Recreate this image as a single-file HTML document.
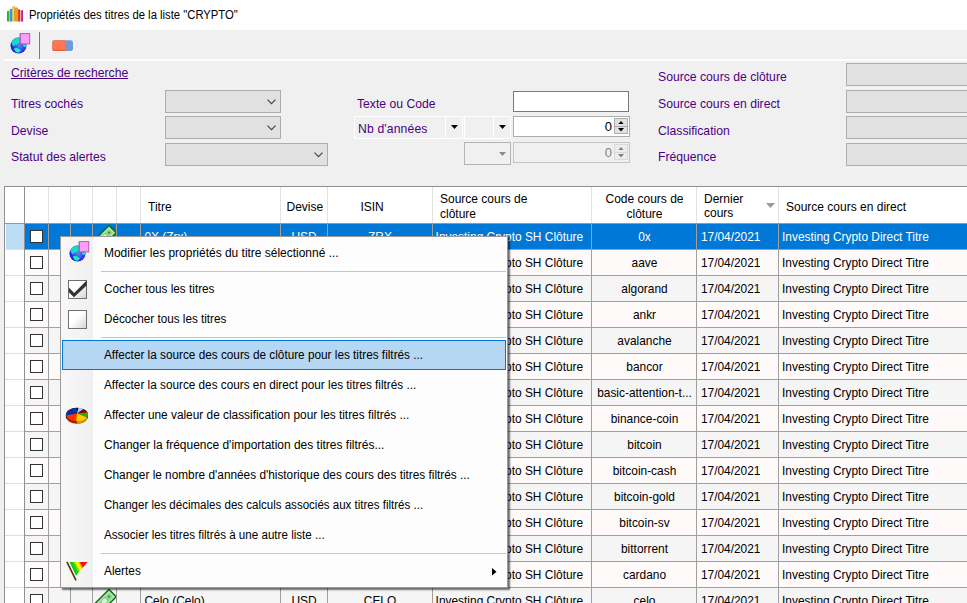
<!DOCTYPE html><html><head><meta charset="utf-8"><title>Propriétés des titres</title><style>
*{box-sizing:border-box;margin:0;padding:0}
html,body{width:967px;height:603px;overflow:hidden;background:#f0f0f0;font-family:"Liberation Sans",sans-serif;font-size:12px;color:#000}
.a{position:absolute;white-space:nowrap;line-height:14px}
.p{color:#4b0082;font-size:12.2px}
.cb{position:absolute;background:#e1e1e1;border:1px solid #adadad}
.ro{position:absolute;background:#e1e1e1;border:1px solid #adadad;border-right:none}
.vl{position:absolute;width:1px;background:#a0a0a0}
.hl{position:absolute;height:1px;background:#a0a0a0}
.row{position:absolute;left:25px;width:950px;height:25px}
.ck{position:absolute;left:30px;width:13px;height:13px;background:#fff;border:1px solid #333}
.c{position:absolute;white-space:nowrap;line-height:14px;text-align:center}
.g{font-size:11.92px}
.mi{position:absolute;left:104.1px;white-space:nowrap;line-height:14px;transform-origin:0 50%;color:#000}
</style></head><body>
<div class="a" style="left:0;top:0;width:967px;height:30px;background:#fff"></div>
<svg class="a" style="left:6px;top:5px" width="18" height="18" viewBox="0 0 18 18">
<defs>
<linearGradient id="g1" x1="0" x2="1"><stop offset="0" stop-color="#1f8f1f"/><stop offset=".5" stop-color="#44d844"/><stop offset="1" stop-color="#176a17"/></linearGradient>
<linearGradient id="g2" x1="0" x2="1"><stop offset="0" stop-color="#1585c8"/><stop offset=".5" stop-color="#3cbcff"/><stop offset="1" stop-color="#0f68a0"/></linearGradient>
<linearGradient id="g3" x1="0" x2="1"><stop offset="0" stop-color="#d0a000"/><stop offset=".5" stop-color="#ffe030"/><stop offset="1" stop-color="#a87c00"/></linearGradient>
<linearGradient id="g4" x1="0" x2="1"><stop offset="0" stop-color="#dc7000"/><stop offset=".5" stop-color="#ffa428"/><stop offset="1" stop-color="#b05400"/></linearGradient>
<linearGradient id="g5" x1="0" x2="1"><stop offset="0" stop-color="#cc2c0c"/><stop offset=".5" stop-color="#ff5428"/><stop offset="1" stop-color="#9a2006"/></linearGradient>
<linearGradient id="g6" x1="0" x2="1"><stop offset="0" stop-color="#b81480"/><stop offset=".5" stop-color="#ff40b8"/><stop offset="1" stop-color="#8a0a5e"/></linearGradient>
</defs>
<rect x="1" y="5.7" width="2.3" height="11" rx="1" fill="url(#g1)"/>
<rect x="3.8" y="3.7" width="2.4" height="13" rx="1" fill="url(#g2)"/>
<rect x="6.4" y="1" width="2.4" height="15.7" rx="1" fill="url(#g3)"/>
<rect x="9.2" y="2.2" width="2.3" height="14.5" rx="1" fill="url(#g4)"/>
<rect x="11.9" y="4.2" width="2.3" height="12.5" rx="1" fill="url(#g5)"/>
<rect x="14.8" y="5" width="2.2" height="11.7" rx="1" fill="url(#g6)"/>
</svg>
<div class="a" style="left:28.5px;top:8px;transform-origin:0 50%;transform:scaleX(0.94)">Propriétés des titres de la liste "CRYPTO"</div>
<svg class="a" style="left:9px;top:32px" width="22" height="22" viewBox="0 0 22 22">
<defs><radialGradient id="gb1" cx=".55" cy=".5" r=".55"><stop offset="0" stop-color="#5a86e4"/><stop offset=".55" stop-color="#3a48ee"/><stop offset="1" stop-color="#1c0ee6"/></radialGradient></defs>
<circle cx="9.5" cy="13.6" r="8" fill="url(#gb1)"/>
<path d="M2.9 9.2L4.6 7 7.2 6.1H10.7L10.9 10.9 8.9 11.4 8.1 13.1 6.3 12.6 5.5 14.4 3.3 13.1 2.5 11.4z" fill="#14ecc0" opacity=".9"/>
<path d="M5 16.3L8.5 15.9 12 18.2 10.7 20 8.9 20.8 6.8 20 5.3 17.8z" fill="#14f0c0"/>
<path d="M14.1 12.2L17.1 12.4V14.6L15.4 15 14.1 13.9z" fill="#14f0c0"/>
<rect x="10.3" y="1.6" width="1.2" height="10.2" fill="#8a8a9a" opacity=".6"/>
<rect x="11.4" y="1.6" width="9.3" height="10.3" fill="#ff9cfc" stroke="#b060b0" stroke-width="1"/>
</svg>
<div class="a" style="left:39px;top:32px;width:1px;height:27px;background:#7a7a7a"></div>
<svg class="a" style="left:52px;top:40px" width="22" height="12" viewBox="0 0 22 12">
<rect x="0.2" y="0.2" width="20.8" height="10.8" rx="2.2" fill="#6e9bd6"/>
<path d="M2.4 .2H13V11H2.4A2.2 2.2 0 0 1 .2 8.8V2.4A2.2 2.2 0 0 1 2.4 .2z" fill="#ff7650"/>
<path d="M.6 9.6A2.2 2.2 0 0 0 2.4 11H13V9.8H2.4z" fill="#ee5a30"/>
</svg>
<div class="a" style="left:4px;top:59px;width:963px;height:2px;background:#fdfdff"></div>
<div class="a p" style="left:11px;top:65.5px;text-decoration:underline">Critères de recherche</div>
<div class="a p" style="left:11px;top:96.8px;">Titres cochés</div>
<div class="a p" style="left:11px;top:123.80000000000001px;">Devise</div>
<div class="a p" style="left:11px;top:150px;">Statut des alertes</div>
<div class="a p" style="left:357px;top:96.9px;">Texte ou Code</div>
<div class="a p" style="left:658px;top:70.2px;">Source cours de clôture</div>
<div class="a p" style="left:658px;top:97px;">Source cours en direct</div>
<div class="a p" style="left:658px;top:124px;">Classification</div>
<div class="a p" style="left:658px;top:150px;">Fréquence</div>
<div class="cb" style="left:165px;top:90px;width:116px;height:23px"><svg style="position:absolute;right:4px;top:8px" width="9" height="6" viewBox="0 0 9 6"><path d="M.5.7L4.5 4.7 8.5.7" fill="none" stroke="#404040" stroke-width="1.1"/></svg></div>
<div class="cb" style="left:165px;top:116px;width:116px;height:23px"><svg style="position:absolute;right:4px;top:8px" width="9" height="6" viewBox="0 0 9 6"><path d="M.5.7L4.5 4.7 8.5.7" fill="none" stroke="#404040" stroke-width="1.1"/></svg></div>
<div class="cb" style="left:165px;top:143px;width:163px;height:23px"><svg style="position:absolute;right:4px;top:8px" width="9" height="6" viewBox="0 0 9 6"><path d="M.5.7L4.5 4.7 8.5.7" fill="none" stroke="#404040" stroke-width="1.1"/></svg></div>
<div class="a" style="left:513px;top:91px;width:116px;height:21px;background:#fff;border:1px solid #7a7a7a"></div>
<div class="a" style="left:354px;top:116px;width:109px;height:23px;border:1px solid #fff"><div style="position:absolute;left:90px;top:0;width:1px;height:21px;background:#fff"></div><svg style="position:absolute;left:96px;top:8px" width="7" height="4" viewBox="0 0 7 4"><path d="M0 0h7L3.5 4z" fill="#000"/></svg></div>
<div class="a p" style="left:358px;top:121.69999999999999px;letter-spacing:.14px">Nb d'années</div>
<div class="a" style="left:464px;top:116px;width:47px;height:23px;border:1px solid #fff"><div style="position:absolute;left:28px;top:0;width:1px;height:21px;background:#fff"></div><svg style="position:absolute;left:34px;top:8px" width="7" height="4" viewBox="0 0 7 4"><path d="M0 0h7L3.5 4z" fill="#000"/></svg></div>
<div class="a" style="left:513px;top:116px;width:117px;height:21px;background:#fff;border:1px solid #adadad"><div style="position:absolute;right:1px;top:1px;width:14px;height:16px;background:#e1e1e1;border:1px solid #adadad"><div style="position:absolute;left:0;top:6.5px;width:12px;height:1px;background:#adadad"></div>
<svg style="position:absolute;left:3px;top:1.5px" width="6" height="3.5" viewBox="0 0 6 3.5"><path d="M0 3.5h6L3 0z" fill="#000"/></svg>
<svg style="position:absolute;left:3px;top:9.3px" width="6" height="3.5" viewBox="0 0 6 3.5"><path d="M0 0h6L3 3.5z" fill="#000"/></svg></div><div class="a" style="right:17px;top:3px;font-size:13px">0</div></div>
<div class="a" style="left:464px;top:142px;width:47px;height:23px;background:#f0f0f0;border:1px solid #b4b4b4"><svg style="position:absolute;left:34px;top:9px" width="7" height="4" viewBox="0 0 7 4"><path d="M0 0h7L3.5 4z" fill="#8a8a8a"/></svg></div>
<div class="a" style="left:513px;top:142px;width:117px;height:21px;background:#f0f0f0;border:1px solid #c4c4c4"><div style="position:absolute;right:1px;top:1px;width:14px;height:16px;background:#ececec;border:1px solid #d8d8d8"><div style="position:absolute;left:0;top:6.5px;width:12px;height:1px;background:#d8d8d8"></div>
<svg style="position:absolute;left:3px;top:1.5px" width="6" height="3.5" viewBox="0 0 6 3.5"><path d="M0 3.5h6L3 0z" fill="#808080"/></svg>
<svg style="position:absolute;left:3px;top:9.3px" width="6" height="3.5" viewBox="0 0 6 3.5"><path d="M0 0h6L3 3.5z" fill="#808080"/></svg></div><div class="a" style="right:17px;top:3px;font-size:13px;color:#808080">0</div></div>
<div class="ro" style="left:846px;top:63px;width:125px;height:23px"></div>
<div class="ro" style="left:846px;top:90px;width:125px;height:23px"></div>
<div class="ro" style="left:846px;top:116px;width:125px;height:23px"></div>
<div class="ro" style="left:846px;top:143px;width:125px;height:23px"></div>
<div class="a" style="left:4px;top:186px;width:970px;height:430px;background:#fff;border:1px solid #909090"></div>
<div class="row" style="top:224px;background:#0078d7"></div>
<div class="a" style="left:6px;top:224px;width:18px;height:25px;background:#bcdcf4"></div>
<div class="hl" style="left:5px;top:249px;width:19px;background:#e0e0e0"></div>
<div class="hl" style="left:24px;top:249px;width:950px"></div>
<div class="row" style="top:250px;background:#fefaf9"></div>
<div class="hl" style="left:5px;top:275px;width:19px;background:#e0e0e0"></div>
<div class="hl" style="left:24px;top:275px;width:950px"></div>
<div class="row" style="top:276px;background:#f5f5f5"></div>
<div class="hl" style="left:5px;top:301px;width:19px;background:#e0e0e0"></div>
<div class="hl" style="left:24px;top:301px;width:950px"></div>
<div class="row" style="top:302px;background:#fefaf9"></div>
<div class="hl" style="left:5px;top:327px;width:19px;background:#e0e0e0"></div>
<div class="hl" style="left:24px;top:327px;width:950px"></div>
<div class="row" style="top:328px;background:#f5f5f5"></div>
<div class="hl" style="left:5px;top:353px;width:19px;background:#e0e0e0"></div>
<div class="hl" style="left:24px;top:353px;width:950px"></div>
<div class="row" style="top:354px;background:#fefaf9"></div>
<div class="hl" style="left:5px;top:379px;width:19px;background:#e0e0e0"></div>
<div class="hl" style="left:24px;top:379px;width:950px"></div>
<div class="row" style="top:380px;background:#f5f5f5"></div>
<div class="hl" style="left:5px;top:405px;width:19px;background:#e0e0e0"></div>
<div class="hl" style="left:24px;top:405px;width:950px"></div>
<div class="row" style="top:406px;background:#fefaf9"></div>
<div class="hl" style="left:5px;top:431px;width:19px;background:#e0e0e0"></div>
<div class="hl" style="left:24px;top:431px;width:950px"></div>
<div class="row" style="top:432px;background:#f5f5f5"></div>
<div class="hl" style="left:5px;top:457px;width:19px;background:#e0e0e0"></div>
<div class="hl" style="left:24px;top:457px;width:950px"></div>
<div class="row" style="top:458px;background:#fefaf9"></div>
<div class="hl" style="left:5px;top:483px;width:19px;background:#e0e0e0"></div>
<div class="hl" style="left:24px;top:483px;width:950px"></div>
<div class="row" style="top:484px;background:#f5f5f5"></div>
<div class="hl" style="left:5px;top:509px;width:19px;background:#e0e0e0"></div>
<div class="hl" style="left:24px;top:509px;width:950px"></div>
<div class="row" style="top:510px;background:#fefaf9"></div>
<div class="hl" style="left:5px;top:535px;width:19px;background:#e0e0e0"></div>
<div class="hl" style="left:24px;top:535px;width:950px"></div>
<div class="row" style="top:536px;background:#f5f5f5"></div>
<div class="hl" style="left:5px;top:561px;width:19px;background:#e0e0e0"></div>
<div class="hl" style="left:24px;top:561px;width:950px"></div>
<div class="row" style="top:562px;background:#fefaf9"></div>
<div class="hl" style="left:5px;top:587px;width:19px;background:#e0e0e0"></div>
<div class="hl" style="left:24px;top:587px;width:950px"></div>
<div class="row" style="top:588px;background:#f5f5f5"></div>
<div class="hl" style="left:5px;top:613px;width:19px;background:#e0e0e0"></div>
<div class="hl" style="left:24px;top:613px;width:950px"></div>
<div class="hl" style="left:5px;top:223px;width:965px;background:#989898"></div>
<div class="vl" style="left:24px;top:187px;height:420px;background:#909090"></div>
<div class="vl" style="left:48px;top:187px;height:36px;background:#e2e2e2"></div>
<div class="vl" style="left:48px;top:224px;height:390px"></div>
<div class="vl" style="left:70px;top:187px;height:36px;background:#e2e2e2"></div>
<div class="vl" style="left:70px;top:224px;height:390px"></div>
<div class="vl" style="left:92px;top:187px;height:36px;background:#e2e2e2"></div>
<div class="vl" style="left:92px;top:224px;height:390px"></div>
<div class="vl" style="left:116px;top:187px;height:36px;background:#e2e2e2"></div>
<div class="vl" style="left:116px;top:224px;height:390px"></div>
<div class="vl" style="left:140px;top:187px;height:36px;background:#e2e2e2"></div>
<div class="vl" style="left:140px;top:224px;height:390px"></div>
<div class="vl" style="left:280px;top:187px;height:36px;background:#e2e2e2"></div>
<div class="vl" style="left:280px;top:224px;height:390px"></div>
<div class="vl" style="left:327px;top:187px;height:36px;background:#e2e2e2"></div>
<div class="vl" style="left:327px;top:224px;height:390px"></div>
<div class="vl" style="left:432px;top:187px;height:36px;background:#e2e2e2"></div>
<div class="vl" style="left:432px;top:224px;height:390px"></div>
<div class="vl" style="left:591px;top:187px;height:36px;background:#e2e2e2"></div>
<div class="vl" style="left:591px;top:224px;height:390px"></div>
<div class="vl" style="left:696px;top:187px;height:36px;background:#e2e2e2"></div>
<div class="vl" style="left:696px;top:224px;height:390px"></div>
<div class="vl" style="left:778px;top:187px;height:36px;background:#e2e2e2"></div>
<div class="vl" style="left:778px;top:224px;height:390px"></div>
<div class="a" style="left:148px;top:200px;">Titre</div>
<div class="a" style="left:286.5px;top:200px;">Devise</div>
<div class="a" style="left:360.4px;top:200px;">ISIN</div>
<div class="a" style="left:440px;top:191.8px;">Source cours de</div>
<div class="a" style="left:440px;top:206.6px;">clôture</div>
<div class="c" style="left:592px;width:105px;top:191.8px">Code cours de</div>
<div class="c" style="left:592px;width:105px;top:206.8px">clôture</div>
<div class="a" style="left:704px;top:191.8px;">Dernier</div>
<div class="a" style="left:704px;top:206.4px;">cours</div>
<div class="a" style="left:786px;top:200px;">Source cours en direct</div>
<svg class="a" style="left:766px;top:203px" width="9" height="5" viewBox="0 0 9 5"><path d="M0 0h9L4.5 5z" fill="#9a9a9a"/></svg>
<div class="ck" style="top:230px"></div>
<svg class="a" style="left:93px;top:224px" width="23" height="25" viewBox="0 0 23 25"><g transform="translate(11.5 13.2) rotate(-45)"><rect x="-11.5" y="-5.2" width="23" height="10.4" fill="#8fd28f" stroke="#0b640b" stroke-width="1.3"/><rect x="-9.6" y="-3.4" width="19.2" height="6.8" fill="none" stroke="#b8e8b8" stroke-width="1"/><ellipse cx="0" cy="0" rx="3.6" ry="2.9" fill="#d6f2d6" stroke="#6cbf6c" stroke-width=".8"/><circle cx="6.5" cy="0" r="1.1" fill="#22a022"/><circle cx="-6.5" cy="0" r="1.1" fill="#22a022"/></g></svg>
<div class="a g" style="left:144.5px;top:230.4px;color:#fff">0X (Zrx)</div>
<div class="c g" style="left:281px;width:46px;top:230.4px;color:#fff">USD</div>
<div class="c g" style="left:328px;width:104px;top:230.4px;color:#fff">ZRX</div>
<div class="a g" style="left:435.6px;top:230.4px;color:#fff">Investing Crypto SH Clôture</div>
<div class="c g" style="left:592px;width:105px;top:230.4px;color:#fff">0x</div>
<div class="a g" style="left:700.9px;top:230.4px;color:#fff">17/04/2021</div>
<div class="a g" style="left:782px;top:230.4px;color:#fff">Investing Crypto Direct Titre</div>
<div class="ck" style="top:256px"></div>
<svg class="a" style="left:93px;top:250px" width="23" height="25" viewBox="0 0 23 25"><g transform="translate(11.5 13.2) rotate(-45)"><rect x="-11.5" y="-5.2" width="23" height="10.4" fill="#8fd28f" stroke="#0b640b" stroke-width="1.3"/><rect x="-9.6" y="-3.4" width="19.2" height="6.8" fill="none" stroke="#b8e8b8" stroke-width="1"/><ellipse cx="0" cy="0" rx="3.6" ry="2.9" fill="#d6f2d6" stroke="#6cbf6c" stroke-width=".8"/><circle cx="6.5" cy="0" r="1.1" fill="#22a022"/><circle cx="-6.5" cy="0" r="1.1" fill="#22a022"/></g></svg>
<div class="a g" style="left:144.5px;top:256.4px;color:#000">Aave (Aave)</div>
<div class="c g" style="left:281px;width:46px;top:256.4px;color:#000">USD</div>
<div class="c g" style="left:328px;width:104px;top:256.4px;color:#000">AAVE</div>
<div class="a g" style="left:435.6px;top:256.4px;color:#000">Investing Crypto SH Clôture</div>
<div class="c g" style="left:592px;width:105px;top:256.4px;color:#000">aave</div>
<div class="a g" style="left:700.9px;top:256.4px;color:#000">17/04/2021</div>
<div class="a g" style="left:782px;top:256.4px;color:#000">Investing Crypto Direct Titre</div>
<div class="ck" style="top:282px"></div>
<svg class="a" style="left:93px;top:276px" width="23" height="25" viewBox="0 0 23 25"><g transform="translate(11.5 13.2) rotate(-45)"><rect x="-11.5" y="-5.2" width="23" height="10.4" fill="#8fd28f" stroke="#0b640b" stroke-width="1.3"/><rect x="-9.6" y="-3.4" width="19.2" height="6.8" fill="none" stroke="#b8e8b8" stroke-width="1"/><ellipse cx="0" cy="0" rx="3.6" ry="2.9" fill="#d6f2d6" stroke="#6cbf6c" stroke-width=".8"/><circle cx="6.5" cy="0" r="1.1" fill="#22a022"/><circle cx="-6.5" cy="0" r="1.1" fill="#22a022"/></g></svg>
<div class="a g" style="left:144.5px;top:282.4px;color:#000">Algorand (Algo)</div>
<div class="c g" style="left:281px;width:46px;top:282.4px;color:#000">USD</div>
<div class="c g" style="left:328px;width:104px;top:282.4px;color:#000">ALGO</div>
<div class="a g" style="left:435.6px;top:282.4px;color:#000">Investing Crypto SH Clôture</div>
<div class="c g" style="left:592px;width:105px;top:282.4px;color:#000">algorand</div>
<div class="a g" style="left:700.9px;top:282.4px;color:#000">17/04/2021</div>
<div class="a g" style="left:782px;top:282.4px;color:#000">Investing Crypto Direct Titre</div>
<div class="ck" style="top:308px"></div>
<svg class="a" style="left:93px;top:302px" width="23" height="25" viewBox="0 0 23 25"><g transform="translate(11.5 13.2) rotate(-45)"><rect x="-11.5" y="-5.2" width="23" height="10.4" fill="#8fd28f" stroke="#0b640b" stroke-width="1.3"/><rect x="-9.6" y="-3.4" width="19.2" height="6.8" fill="none" stroke="#b8e8b8" stroke-width="1"/><ellipse cx="0" cy="0" rx="3.6" ry="2.9" fill="#d6f2d6" stroke="#6cbf6c" stroke-width=".8"/><circle cx="6.5" cy="0" r="1.1" fill="#22a022"/><circle cx="-6.5" cy="0" r="1.1" fill="#22a022"/></g></svg>
<div class="a g" style="left:144.5px;top:308.4px;color:#000">Ankr (Ankr)</div>
<div class="c g" style="left:281px;width:46px;top:308.4px;color:#000">USD</div>
<div class="c g" style="left:328px;width:104px;top:308.4px;color:#000">ANKR</div>
<div class="a g" style="left:435.6px;top:308.4px;color:#000">Investing Crypto SH Clôture</div>
<div class="c g" style="left:592px;width:105px;top:308.4px;color:#000">ankr</div>
<div class="a g" style="left:700.9px;top:308.4px;color:#000">17/04/2021</div>
<div class="a g" style="left:782px;top:308.4px;color:#000">Investing Crypto Direct Titre</div>
<div class="ck" style="top:334px"></div>
<svg class="a" style="left:93px;top:328px" width="23" height="25" viewBox="0 0 23 25"><g transform="translate(11.5 13.2) rotate(-45)"><rect x="-11.5" y="-5.2" width="23" height="10.4" fill="#8fd28f" stroke="#0b640b" stroke-width="1.3"/><rect x="-9.6" y="-3.4" width="19.2" height="6.8" fill="none" stroke="#b8e8b8" stroke-width="1"/><ellipse cx="0" cy="0" rx="3.6" ry="2.9" fill="#d6f2d6" stroke="#6cbf6c" stroke-width=".8"/><circle cx="6.5" cy="0" r="1.1" fill="#22a022"/><circle cx="-6.5" cy="0" r="1.1" fill="#22a022"/></g></svg>
<div class="a g" style="left:144.5px;top:334.4px;color:#000">Avalanche (Avax)</div>
<div class="c g" style="left:281px;width:46px;top:334.4px;color:#000">USD</div>
<div class="c g" style="left:328px;width:104px;top:334.4px;color:#000">AVAX</div>
<div class="a g" style="left:435.6px;top:334.4px;color:#000">Investing Crypto SH Clôture</div>
<div class="c g" style="left:592px;width:105px;top:334.4px;color:#000">avalanche</div>
<div class="a g" style="left:700.9px;top:334.4px;color:#000">17/04/2021</div>
<div class="a g" style="left:782px;top:334.4px;color:#000">Investing Crypto Direct Titre</div>
<div class="ck" style="top:360px"></div>
<svg class="a" style="left:93px;top:354px" width="23" height="25" viewBox="0 0 23 25"><g transform="translate(11.5 13.2) rotate(-45)"><rect x="-11.5" y="-5.2" width="23" height="10.4" fill="#8fd28f" stroke="#0b640b" stroke-width="1.3"/><rect x="-9.6" y="-3.4" width="19.2" height="6.8" fill="none" stroke="#b8e8b8" stroke-width="1"/><ellipse cx="0" cy="0" rx="3.6" ry="2.9" fill="#d6f2d6" stroke="#6cbf6c" stroke-width=".8"/><circle cx="6.5" cy="0" r="1.1" fill="#22a022"/><circle cx="-6.5" cy="0" r="1.1" fill="#22a022"/></g></svg>
<div class="a g" style="left:144.5px;top:360.4px;color:#000">Bancor (Bnt)</div>
<div class="c g" style="left:281px;width:46px;top:360.4px;color:#000">USD</div>
<div class="c g" style="left:328px;width:104px;top:360.4px;color:#000">BNT</div>
<div class="a g" style="left:435.6px;top:360.4px;color:#000">Investing Crypto SH Clôture</div>
<div class="c g" style="left:592px;width:105px;top:360.4px;color:#000">bancor</div>
<div class="a g" style="left:700.9px;top:360.4px;color:#000">17/04/2021</div>
<div class="a g" style="left:782px;top:360.4px;color:#000">Investing Crypto Direct Titre</div>
<div class="ck" style="top:386px"></div>
<svg class="a" style="left:93px;top:380px" width="23" height="25" viewBox="0 0 23 25"><g transform="translate(11.5 13.2) rotate(-45)"><rect x="-11.5" y="-5.2" width="23" height="10.4" fill="#8fd28f" stroke="#0b640b" stroke-width="1.3"/><rect x="-9.6" y="-3.4" width="19.2" height="6.8" fill="none" stroke="#b8e8b8" stroke-width="1"/><ellipse cx="0" cy="0" rx="3.6" ry="2.9" fill="#d6f2d6" stroke="#6cbf6c" stroke-width=".8"/><circle cx="6.5" cy="0" r="1.1" fill="#22a022"/><circle cx="-6.5" cy="0" r="1.1" fill="#22a022"/></g></svg>
<div class="a g" style="left:144.5px;top:386.4px;color:#000">Basic Attention (Bat)</div>
<div class="c g" style="left:281px;width:46px;top:386.4px;color:#000">USD</div>
<div class="c g" style="left:328px;width:104px;top:386.4px;color:#000">BAT</div>
<div class="a g" style="left:435.6px;top:386.4px;color:#000">Investing Crypto SH Clôture</div>
<div class="c g" style="left:592px;width:105px;top:386.4px;color:#000">basic-attention-t...</div>
<div class="a g" style="left:700.9px;top:386.4px;color:#000">17/04/2021</div>
<div class="a g" style="left:782px;top:386.4px;color:#000">Investing Crypto Direct Titre</div>
<div class="ck" style="top:412px"></div>
<svg class="a" style="left:93px;top:406px" width="23" height="25" viewBox="0 0 23 25"><g transform="translate(11.5 13.2) rotate(-45)"><rect x="-11.5" y="-5.2" width="23" height="10.4" fill="#8fd28f" stroke="#0b640b" stroke-width="1.3"/><rect x="-9.6" y="-3.4" width="19.2" height="6.8" fill="none" stroke="#b8e8b8" stroke-width="1"/><ellipse cx="0" cy="0" rx="3.6" ry="2.9" fill="#d6f2d6" stroke="#6cbf6c" stroke-width=".8"/><circle cx="6.5" cy="0" r="1.1" fill="#22a022"/><circle cx="-6.5" cy="0" r="1.1" fill="#22a022"/></g></svg>
<div class="a g" style="left:144.5px;top:412.4px;color:#000">Binance Coin (Bnb)</div>
<div class="c g" style="left:281px;width:46px;top:412.4px;color:#000">USD</div>
<div class="c g" style="left:328px;width:104px;top:412.4px;color:#000">BNB</div>
<div class="a g" style="left:435.6px;top:412.4px;color:#000">Investing Crypto SH Clôture</div>
<div class="c g" style="left:592px;width:105px;top:412.4px;color:#000">binance-coin</div>
<div class="a g" style="left:700.9px;top:412.4px;color:#000">17/04/2021</div>
<div class="a g" style="left:782px;top:412.4px;color:#000">Investing Crypto Direct Titre</div>
<div class="ck" style="top:438px"></div>
<svg class="a" style="left:93px;top:432px" width="23" height="25" viewBox="0 0 23 25"><g transform="translate(11.5 13.2) rotate(-45)"><rect x="-11.5" y="-5.2" width="23" height="10.4" fill="#8fd28f" stroke="#0b640b" stroke-width="1.3"/><rect x="-9.6" y="-3.4" width="19.2" height="6.8" fill="none" stroke="#b8e8b8" stroke-width="1"/><ellipse cx="0" cy="0" rx="3.6" ry="2.9" fill="#d6f2d6" stroke="#6cbf6c" stroke-width=".8"/><circle cx="6.5" cy="0" r="1.1" fill="#22a022"/><circle cx="-6.5" cy="0" r="1.1" fill="#22a022"/></g></svg>
<div class="a g" style="left:144.5px;top:438.4px;color:#000">Bitcoin (Btc)</div>
<div class="c g" style="left:281px;width:46px;top:438.4px;color:#000">USD</div>
<div class="c g" style="left:328px;width:104px;top:438.4px;color:#000">BTC</div>
<div class="a g" style="left:435.6px;top:438.4px;color:#000">Investing Crypto SH Clôture</div>
<div class="c g" style="left:592px;width:105px;top:438.4px;color:#000">bitcoin</div>
<div class="a g" style="left:700.9px;top:438.4px;color:#000">17/04/2021</div>
<div class="a g" style="left:782px;top:438.4px;color:#000">Investing Crypto Direct Titre</div>
<div class="ck" style="top:464px"></div>
<svg class="a" style="left:93px;top:458px" width="23" height="25" viewBox="0 0 23 25"><g transform="translate(11.5 13.2) rotate(-45)"><rect x="-11.5" y="-5.2" width="23" height="10.4" fill="#8fd28f" stroke="#0b640b" stroke-width="1.3"/><rect x="-9.6" y="-3.4" width="19.2" height="6.8" fill="none" stroke="#b8e8b8" stroke-width="1"/><ellipse cx="0" cy="0" rx="3.6" ry="2.9" fill="#d6f2d6" stroke="#6cbf6c" stroke-width=".8"/><circle cx="6.5" cy="0" r="1.1" fill="#22a022"/><circle cx="-6.5" cy="0" r="1.1" fill="#22a022"/></g></svg>
<div class="a g" style="left:144.5px;top:464.4px;color:#000">Bitcoin Cash (Bch)</div>
<div class="c g" style="left:281px;width:46px;top:464.4px;color:#000">USD</div>
<div class="c g" style="left:328px;width:104px;top:464.4px;color:#000">BCH</div>
<div class="a g" style="left:435.6px;top:464.4px;color:#000">Investing Crypto SH Clôture</div>
<div class="c g" style="left:592px;width:105px;top:464.4px;color:#000">bitcoin-cash</div>
<div class="a g" style="left:700.9px;top:464.4px;color:#000">17/04/2021</div>
<div class="a g" style="left:782px;top:464.4px;color:#000">Investing Crypto Direct Titre</div>
<div class="ck" style="top:490px"></div>
<svg class="a" style="left:93px;top:484px" width="23" height="25" viewBox="0 0 23 25"><g transform="translate(11.5 13.2) rotate(-45)"><rect x="-11.5" y="-5.2" width="23" height="10.4" fill="#8fd28f" stroke="#0b640b" stroke-width="1.3"/><rect x="-9.6" y="-3.4" width="19.2" height="6.8" fill="none" stroke="#b8e8b8" stroke-width="1"/><ellipse cx="0" cy="0" rx="3.6" ry="2.9" fill="#d6f2d6" stroke="#6cbf6c" stroke-width=".8"/><circle cx="6.5" cy="0" r="1.1" fill="#22a022"/><circle cx="-6.5" cy="0" r="1.1" fill="#22a022"/></g></svg>
<div class="a g" style="left:144.5px;top:490.4px;color:#000">Bitcoin Gold (Btg)</div>
<div class="c g" style="left:281px;width:46px;top:490.4px;color:#000">USD</div>
<div class="c g" style="left:328px;width:104px;top:490.4px;color:#000">BTG</div>
<div class="a g" style="left:435.6px;top:490.4px;color:#000">Investing Crypto SH Clôture</div>
<div class="c g" style="left:592px;width:105px;top:490.4px;color:#000">bitcoin-gold</div>
<div class="a g" style="left:700.9px;top:490.4px;color:#000">17/04/2021</div>
<div class="a g" style="left:782px;top:490.4px;color:#000">Investing Crypto Direct Titre</div>
<div class="ck" style="top:516px"></div>
<svg class="a" style="left:93px;top:510px" width="23" height="25" viewBox="0 0 23 25"><g transform="translate(11.5 13.2) rotate(-45)"><rect x="-11.5" y="-5.2" width="23" height="10.4" fill="#8fd28f" stroke="#0b640b" stroke-width="1.3"/><rect x="-9.6" y="-3.4" width="19.2" height="6.8" fill="none" stroke="#b8e8b8" stroke-width="1"/><ellipse cx="0" cy="0" rx="3.6" ry="2.9" fill="#d6f2d6" stroke="#6cbf6c" stroke-width=".8"/><circle cx="6.5" cy="0" r="1.1" fill="#22a022"/><circle cx="-6.5" cy="0" r="1.1" fill="#22a022"/></g></svg>
<div class="a g" style="left:144.5px;top:516.4px;color:#000">Bitcoin SV (Bsv)</div>
<div class="c g" style="left:281px;width:46px;top:516.4px;color:#000">USD</div>
<div class="c g" style="left:328px;width:104px;top:516.4px;color:#000">BSV</div>
<div class="a g" style="left:435.6px;top:516.4px;color:#000">Investing Crypto SH Clôture</div>
<div class="c g" style="left:592px;width:105px;top:516.4px;color:#000">bitcoin-sv</div>
<div class="a g" style="left:700.9px;top:516.4px;color:#000">17/04/2021</div>
<div class="a g" style="left:782px;top:516.4px;color:#000">Investing Crypto Direct Titre</div>
<div class="ck" style="top:542px"></div>
<svg class="a" style="left:93px;top:536px" width="23" height="25" viewBox="0 0 23 25"><g transform="translate(11.5 13.2) rotate(-45)"><rect x="-11.5" y="-5.2" width="23" height="10.4" fill="#8fd28f" stroke="#0b640b" stroke-width="1.3"/><rect x="-9.6" y="-3.4" width="19.2" height="6.8" fill="none" stroke="#b8e8b8" stroke-width="1"/><ellipse cx="0" cy="0" rx="3.6" ry="2.9" fill="#d6f2d6" stroke="#6cbf6c" stroke-width=".8"/><circle cx="6.5" cy="0" r="1.1" fill="#22a022"/><circle cx="-6.5" cy="0" r="1.1" fill="#22a022"/></g></svg>
<div class="a g" style="left:144.5px;top:542.4px;color:#000">BitTorrent (Btt)</div>
<div class="c g" style="left:281px;width:46px;top:542.4px;color:#000">USD</div>
<div class="c g" style="left:328px;width:104px;top:542.4px;color:#000">BTT</div>
<div class="a g" style="left:435.6px;top:542.4px;color:#000">Investing Crypto SH Clôture</div>
<div class="c g" style="left:592px;width:105px;top:542.4px;color:#000">bittorrent</div>
<div class="a g" style="left:700.9px;top:542.4px;color:#000">17/04/2021</div>
<div class="a g" style="left:782px;top:542.4px;color:#000">Investing Crypto Direct Titre</div>
<div class="ck" style="top:568px"></div>
<svg class="a" style="left:93px;top:562px" width="23" height="25" viewBox="0 0 23 25"><g transform="translate(11.5 13.2) rotate(-45)"><rect x="-11.5" y="-5.2" width="23" height="10.4" fill="#8fd28f" stroke="#0b640b" stroke-width="1.3"/><rect x="-9.6" y="-3.4" width="19.2" height="6.8" fill="none" stroke="#b8e8b8" stroke-width="1"/><ellipse cx="0" cy="0" rx="3.6" ry="2.9" fill="#d6f2d6" stroke="#6cbf6c" stroke-width=".8"/><circle cx="6.5" cy="0" r="1.1" fill="#22a022"/><circle cx="-6.5" cy="0" r="1.1" fill="#22a022"/></g></svg>
<div class="a g" style="left:144.5px;top:568.4px;color:#000">Cardano (Ada)</div>
<div class="c g" style="left:281px;width:46px;top:568.4px;color:#000">USD</div>
<div class="c g" style="left:328px;width:104px;top:568.4px;color:#000">ADA</div>
<div class="a g" style="left:435.6px;top:568.4px;color:#000">Investing Crypto SH Clôture</div>
<div class="c g" style="left:592px;width:105px;top:568.4px;color:#000">cardano</div>
<div class="a g" style="left:700.9px;top:568.4px;color:#000">17/04/2021</div>
<div class="a g" style="left:782px;top:568.4px;color:#000">Investing Crypto Direct Titre</div>
<div class="ck" style="top:594px"></div>
<svg class="a" style="left:93px;top:588px" width="23" height="25" viewBox="0 0 23 25"><g transform="translate(11.5 13.2) rotate(-45)"><rect x="-11.5" y="-5.2" width="23" height="10.4" fill="#8fd28f" stroke="#0b640b" stroke-width="1.3"/><rect x="-9.6" y="-3.4" width="19.2" height="6.8" fill="none" stroke="#b8e8b8" stroke-width="1"/><ellipse cx="0" cy="0" rx="3.6" ry="2.9" fill="#d6f2d6" stroke="#6cbf6c" stroke-width=".8"/><circle cx="6.5" cy="0" r="1.1" fill="#22a022"/><circle cx="-6.5" cy="0" r="1.1" fill="#22a022"/></g></svg>
<div class="a g" style="left:144.5px;top:594.4px;color:#000">Celo (Celo)</div>
<div class="c g" style="left:281px;width:46px;top:594.4px;color:#000">USD</div>
<div class="c g" style="left:328px;width:104px;top:594.4px;color:#000">CELO</div>
<div class="a g" style="left:435.6px;top:594.4px;color:#000">Investing Crypto SH Clôture</div>
<div class="c g" style="left:592px;width:105px;top:594.4px;color:#000">celo</div>
<div class="a g" style="left:700.9px;top:594.4px;color:#000">17/04/2021</div>
<div class="a g" style="left:782px;top:594.4px;color:#000">Investing Crypto Direct Titre</div>
<div class="a" style="left:60px;top:236px;width:448px;height:352px;background:#fdfdfd;border:1px solid #9a9a9a;box-shadow:2px 2px 1.5px rgba(0,0,0,.55)"></div>
<div class="a" style="left:61px;top:237px;width:32px;height:350px;background:linear-gradient(90deg,#f8f8f8,#f0f0f0)"></div>
<div class="hl" style="left:101px;top:271px;width:405px;background:#c4c4c4"></div>
<div class="hl" style="left:101px;top:337px;width:405px;background:#c4c4c4"></div>
<div class="hl" style="left:101px;top:553px;width:405px;background:#c4c4c4"></div>
<div class="a" style="left:62px;top:340px;width:444px;height:30px;background:#b5d7f3;border:1px solid #0078d7"></div>
<div class="mi" style="top:245.89999999999998px;transform:scaleX(0.9964)">Modifier les propriétés du titre sélectionné ...</div>
<div class="mi" style="top:281.8px;transform:scaleX(0.9803)">Cocher tous les titres</div>
<div class="mi" style="top:311.8px;transform:scaleX(0.9761)">Décocher tous les titres</div>
<div class="mi" style="top:347.8px;transform:scaleX(0.9810)">Affecter la source des cours de clôture pour les titres filtrés ...</div>
<div class="mi" style="top:377.7px;transform:scaleX(0.9802)">Affecter la source des cours en direct pour les titres filtrés ...</div>
<div class="mi" style="top:407.7px;transform:scaleX(0.9875)">Affecter une valeur de classification pour les titres filtrés ...</div>
<div class="mi" style="top:437.7px;transform:scaleX(0.9975)">Changer la fréquence d'importation des titres filtrés...</div>
<div class="mi" style="top:467.7px;transform:scaleX(0.9851)">Changer le nombre d'années d'historique des cours des titres filtrés ...</div>
<div class="mi" style="top:497.7px;transform:scaleX(0.9607)">Changer les décimales des calculs associés aux titres filtrés ...</div>
<div class="mi" style="top:527.7px;transform:scaleX(0.9676)">Associer les titres filtrés à une autre liste ...</div>
<div class="mi" style="top:563.6px;transform:scaleX(0.9850)">Alertes</div>
<svg class="a" style="left:68px;top:240px" width="22" height="22" viewBox="0 0 22 22">
<defs><radialGradient id="gb2" cx=".55" cy=".5" r=".55"><stop offset="0" stop-color="#5a86e4"/><stop offset=".55" stop-color="#3a48ee"/><stop offset="1" stop-color="#1c0ee6"/></radialGradient></defs>
<circle cx="9.5" cy="13.6" r="8" fill="url(#gb2)"/>
<path d="M2.9 9.2L4.6 7 7.2 6.1H10.7L10.9 10.9 8.9 11.4 8.1 13.1 6.3 12.6 5.5 14.4 3.3 13.1 2.5 11.4z" fill="#14ecc0" opacity=".9"/>
<path d="M5 16.3L8.5 15.9 12 18.2 10.7 20 8.9 20.8 6.8 20 5.3 17.8z" fill="#14f0c0"/>
<path d="M14.1 12.2L17.1 12.4V14.6L15.4 15 14.1 13.9z" fill="#14f0c0"/>
<rect x="10.3" y="1.6" width="1.2" height="10.2" fill="#8a8a9a" opacity=".6"/>
<rect x="11.4" y="1.6" width="9.3" height="10.3" fill="#ff9cfc" stroke="#b060b0" stroke-width="1"/>
</svg>
<svg class="a" style="left:68px;top:280px" width="19" height="19" viewBox="0 0 19 19"><defs><linearGradient id="ck1" x1="0" y1="0" x2="1" y2="1"><stop offset=".45" stop-color="#fff"/><stop offset="1" stop-color="#d2d2d2"/></linearGradient></defs><rect x=".5" y=".5" width="18" height="18" fill="url(#ck1)" stroke="#707070"/><path d="M.8 7.6L6.2 13 18.6 .5V5.4L6 17.3.8 12.2z" fill="#333"/></svg>
<svg class="a" style="left:68px;top:310px" width="19" height="19" viewBox="0 0 19 19"><defs><linearGradient id="ck2" x1="0" y1="0" x2="1" y2="1"><stop offset=".45" stop-color="#fff"/><stop offset="1" stop-color="#d2d2d2"/></linearGradient></defs><rect x=".5" y=".5" width="18" height="18" fill="url(#ck2)" stroke="#707070"/></svg>
<svg class="a" style="left:65px;top:406px" width="24" height="19" viewBox="0 0 24 19">
<ellipse cx="12" cy="10.8" rx="11" ry="7" fill="#b02000"/>
<path d="M12 10.8V17.8A11 7 0 0 0 22.6 12z" fill="#c8a000"/>
<path d="M22.6 12A11 7 0 0 0 23 9l-3 1z" fill="#1f7a00"/>
<path d="M1 8.4A11 7 0 0 0 2.2 13.6L2.6 9.8z" fill="#002a80"/><ellipse cx="12" cy="8.4" rx="11" ry="6.6" fill="#ff3300"/>
<path d="M12 7.4L1.2 9.6A11 6.6 0 0 1 12 1.8z" fill="#003399"/>
<path d="M12 7.4V1.8A11 6.6 0 0 1 13.6 1.9z" fill="#101000"/>
<path d="M12 7.4L13.6 1.9A11 6.6 0 0 1 18.5 3z" fill="#99ddff"/>
<path d="M12 7.4L18.5 3A11 6.6 0 0 1 22.6 6.6z" fill="#800018"/>
<path d="M12 7.4L22.6 6.6A11 6.6 0 0 1 21.8 11.4z" fill="#33aa00"/>
<path d="M12 7.4L21.8 11.4A11 6.6 0 0 1 11.2 15z" fill="#ffcc00"/>
</svg>
<svg class="a" style="left:65px;top:560px" width="24" height="22" viewBox="0 0 24 22">
<defs><linearGradient id="fl" gradientUnits="userSpaceOnUse" x1="7" y1="8" x2="21.7" y2=".4"><stop offset="0" stop-color="#00c010"/><stop offset=".2" stop-color="#28d010"/><stop offset=".4" stop-color="#ffff00"/><stop offset=".5" stop-color="#ffe400"/><stop offset=".63" stop-color="#ee1010"/><stop offset="1" stop-color="#ee1010"/></linearGradient></defs>
<path d="M4.6 2H22.6L11 15.6z" fill="url(#fl)"/>
<path d="M1.9 1.8L11 20.4" stroke="#5a3204" stroke-width="1.6" fill="none"/>
</svg>
<svg class="a" style="left:492px;top:568px" width="5" height="8" viewBox="0 0 5 8"><path d="M0 0L4.5 3.8 0 7.6z" fill="#000"/></svg>
</body></html>
